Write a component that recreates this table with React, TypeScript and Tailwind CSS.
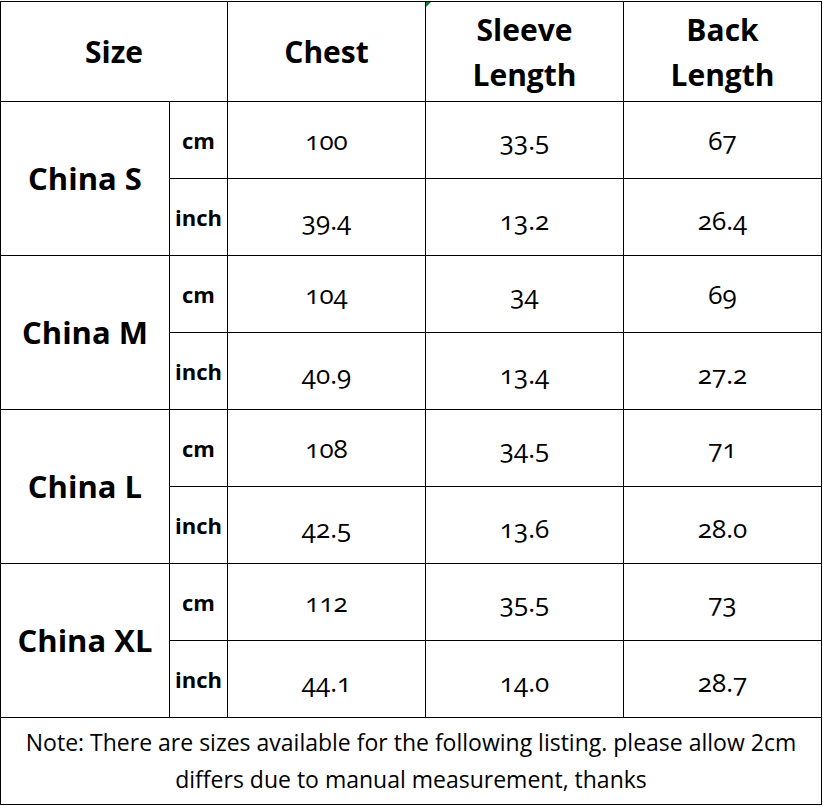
import React from "react";

const rows = [
  { name: "China S", cm: ["100", "33.5", "67"], inch: ["39.4", "13.2", "26.4"] },
  { name: "China M", cm: ["104", "34", "69"], inch: ["40.9", "13.4", "27.2"] },
  { name: "China L", cm: ["108", "34.5", "71"], inch: ["42.5", "13.6", "28.0"] },
  { name: "China XL", cm: ["112", "35.5", "73"], inch: ["44.1", "14.0", "28.7"] },
];

const num = "text-[26px] font-normal text-center align-middle border border-black [font-variant-numeric:oldstyle-nums]";
const unit = "text-[22px] font-bold text-center align-middle border border-black";

export default function App() {
  return (
    <div
      className="w-[823px] h-[806px] bg-white text-black overflow-hidden"
      style={{ fontFamily: '"Open Sans", "Noto Sans", sans-serif' }}
    >
      <table className="border-collapse table-fixed w-[822px] mt-px">
        <colgroup>
          <col className="w-[169px]" />
          <col className="w-[58px]" />
          <col className="w-[198px]" />
          <col className="w-[198px]" />
          <col className="w-[198px]" />
        </colgroup>
        <tbody>
          <tr className="h-[100px]">
            <td colSpan={2} className="border border-black text-center align-middle text-[30px] font-bold">
              Size
            </td>
            <td className="border border-black text-center align-middle text-[30px] font-bold">Chest</td>
            <td className="relative border border-black text-center align-middle text-[30px] font-bold leading-[45px]">
              <span className="absolute left-0 top-0 w-0 h-0 border-t-[5px] border-r-[5px] border-t-green-700 border-r-transparent" />
              Sleeve
              <br />
              Length
            </td>
            <td className="border border-black text-center align-middle text-[30px] font-bold leading-[45px]">
              Back
              <br />
              Length
            </td>
          </tr>
          {rows.map((r) => (
            <React.Fragment key={r.name}>
              <tr className="h-[77px]">
                <td rowSpan={2} className="border border-black text-center align-middle text-[31px] font-bold">
                  {r.name}
                </td>
                <td className={unit}>cm</td>
                {r.cm.map((v, i) => (
                  <td key={i} className={num}>
                    {v}
                  </td>
                ))}
              </tr>
              <tr className="h-[77px]">
                <td className={unit}>inch</td>
                {r.inch.map((v, i) => (
                  <td key={i} className={num}>
                    <span className="relative top-[3px]">{v}</span>
                  </td>
                ))}
              </tr>
            </React.Fragment>
          ))}
          <tr className="h-[87px]">
            <td colSpan={5} className="border border-black text-center align-middle text-[23px] leading-[37px] px-1 whitespace-nowrap">
              Note: There are sizes available for the following listing. please allow 2cm
              <br />
              differs due to manual measurement, thanks
            </td>
          </tr>
        </tbody>
      </table>
    </div>
  );
}
